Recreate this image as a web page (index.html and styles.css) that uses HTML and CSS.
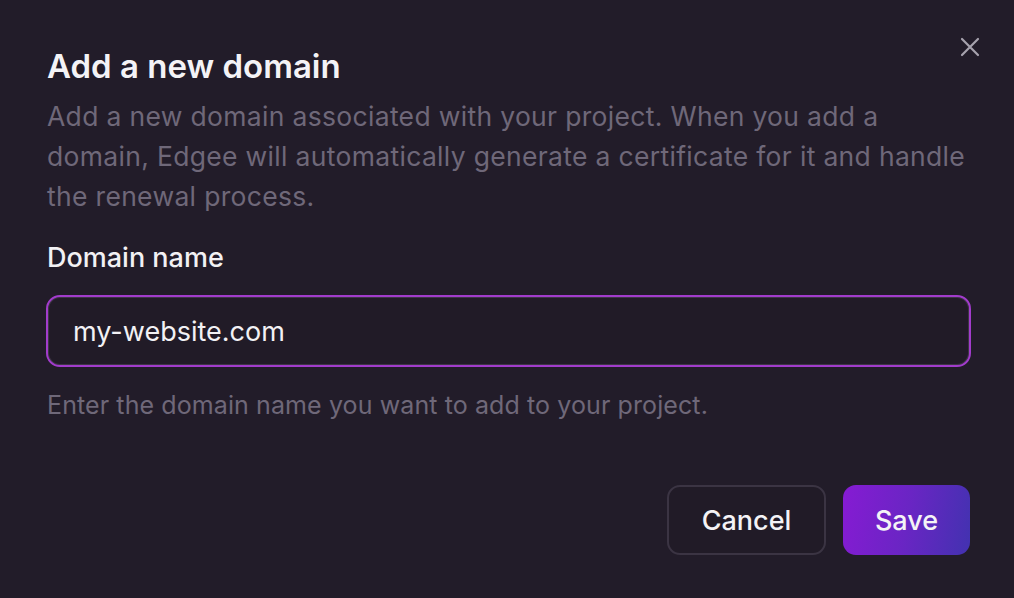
FILE: index.html
```html
<!DOCTYPE html>
<html lang="en">
<head>
<meta charset="utf-8">
<title>Add a new domain</title>
<link rel="stylesheet" href="styles.css">
</head>
<body>
<div class="dialog">
  <button class="close" aria-label="Close">
    <svg width="20" height="20" viewBox="0 0 20 20" fill="none" stroke="currentColor" stroke-width="2.2" stroke-linecap="round"><path d="M2 2L18 18M18 2L2 18"/></svg>
  </button>
  <header class="head">
    <h1 class="title">Add a new domain</h1>
    <p class="desc">Add a new domain associated with your project. When you add a domain, Edgee will automatically generate a certificate for it and handle the renewal process.</p>
  </header>
  <div class="field">
    <label class="label" for="domain">Domain name</label>
    <input class="input" id="domain" type="text" value="my-website.com">
    <p class="hint">Enter the domain name you want to add to your project.</p>
  </div>
  <div class="actions">
    <button class="btn btn-cancel">Cancel</button>
    <button class="btn btn-save">Save</button>
  </div>
</div>
</body>
</html>
```
FILE: styles.css
```css
html, body {
  margin: 0;
  padding: 0;
  background: #221c29;
  width: 1014px;
  height: 598px;
  overflow: hidden;
}
body {
  font-family: Inter, "Noto Sans", sans-serif;
  color: #f2f1f4;
}
.dialog {
  position: relative;
  box-sizing: border-box;
  padding: 44px 44px 0 46px;
  display: flex;
  flex-direction: column;
}
.close {
  position: absolute;
  top: 37px;
  right: 34px;
  width: 20px;
  height: 20px;
  padding: 0;
  background: none;
  border: 0;
  color: #a7a2ae;
  display: flex;
}
.head {
  display: flex;
  flex-direction: column;
}
.title {
  margin: 0;
  font-size: 33px;
  line-height: 44px;
  font-weight: 600;
  letter-spacing: 0;
  color: #f4f3f6;
  padding-left: 1px;
}
.desc {
  margin: 8px 0 0;
  font-size: 26.5px;
  line-height: 40px;
  letter-spacing: 0.32px;
  color: #6f6879;
  padding-left: 1px;
  width: 928px;
}
.field {
  display: flex;
  flex-direction: column;
  margin-top: 22px;
}
.label {
  font-size: 27px;
  line-height: 40px;
  font-weight: 500;
  color: #f2f1f4;
  padding-left: 1px;
}
.input {
  margin-top: 17px;
  box-sizing: border-box;
  height: 72px;
  width: 925px;
  background: #211b27;
  border: 2px solid #a23ccc;
  border-radius: 14px;
  padding: 0 25px;
  font-family: Inter, "Noto Sans", sans-serif;
  font-size: 27px;
  color: #f2f1f4;
  outline: none;
  box-shadow: inset 0 0 0 1px #3e3646;
}
.hint {
  margin: 18px 0 0;
  font-size: 25px;
  line-height: 40px;
  letter-spacing: 0.1px;
  color: #6f6879;
  padding-left: 1px;
}
.actions {
  display: flex;
  justify-content: flex-end;
  gap: 17px;
  margin-top: 60px;
}
.btn {
  box-sizing: border-box;
  height: 70px;
  border-radius: 13px;
  font-family: Inter, "Noto Sans", sans-serif;
  font-size: 27px;
  font-weight: 500;
  color: #f4f3f6;
  padding: 0;
}
.btn-cancel {
  width: 159px;
  background: #211b27;
  border: 2px solid #3b3443;
}
.btn-save {
  width: 127px;
  border: 0;
  background: linear-gradient(100deg, #861bd3 0%, #6a25c4 50%, #4232b0 100%);
}
```
